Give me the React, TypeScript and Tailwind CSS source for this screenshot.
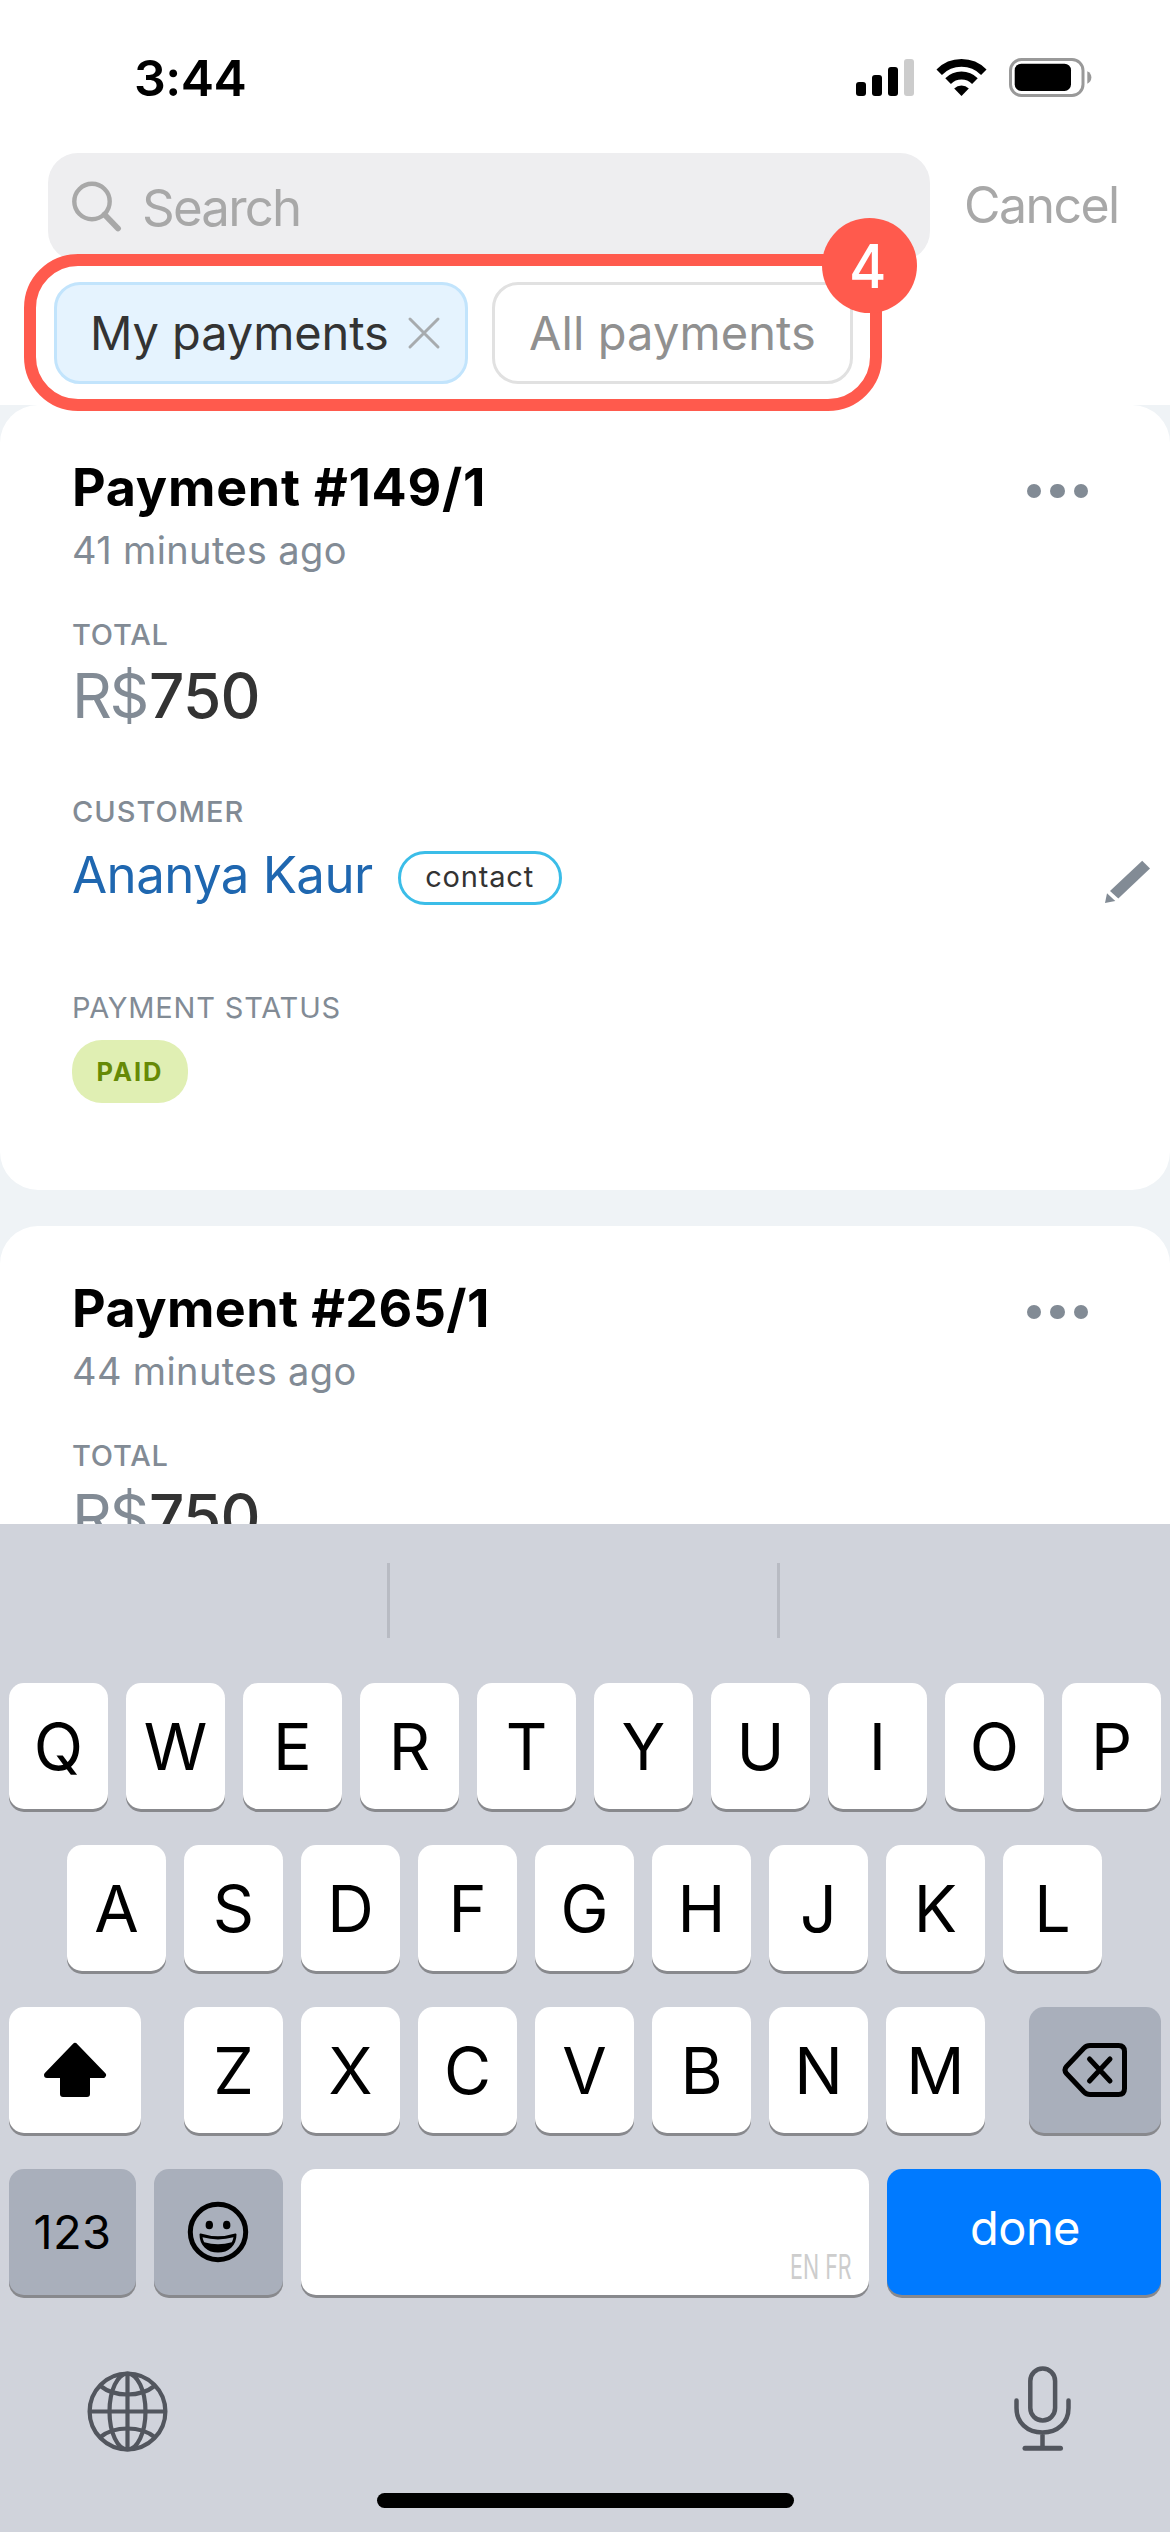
import type { ReactNode } from 'react'
import clsx from 'clsx'

type Payment = {
  id: string
  ago: string
  tracking: string
  customer?: string
  status?: string
}

const payments: Payment[] = [
  {
    id: '149/1',
    ago: '41 minutes ago',
    tracking: 'tracking-[0.76px]',
    customer: 'Ananya Kaur',
    status: 'PAID',
  },
  { id: '265/1', ago: '44 minutes ago', tracking: 'tracking-[0.42px]' },
]

function StatusBar() {
  return (
    <div className="flex h-[153px] items-start justify-between pl-[134px] pr-[78px]">
      <span className="mt-[48px] text-[50px] leading-[60px] font-semibold tracking-[-0.55px]">3:44</span>
      <div className="mt-[58px] flex">
        {/* Signal */}
        <svg width="58" height="39" viewBox="0 0 58 39">
          <rect x="0" y="24" width="10" height="14" rx="3" />
          <rect x="16" y="17" width="10" height="21" rx="3" />
          <rect x="32" y="9" width="10" height="29" rx="3" />
          <rect x="48" y="1" width="10" height="37" rx="3" fill="#cccccc" />
        </svg>
        {/* Wifi */}
        <svg className="ml-[22px]" width="51" height="39" viewBox="0 0 51 39" fill="none" stroke="#000">
          <path d="M3.2 14.2A31.5 31.5 0 0 1 47.8 14.2" strokeWidth="7.7" />
          <path d="M12.1 23.1A19 19 0 0 1 38.9 23.1" strokeWidth="8" />
          <path d="M25.5 38L18.2 30.4A10.6 10.6 0 0 1 32.8 30.4Z" fill="#000" stroke="none" />
        </svg>
        {/* Battery */}
        <svg className="ml-[22px]" width="83" height="39" viewBox="0 0 83 39">
          <rect x="1.5" y="1.5" width="72.5" height="36" rx="11" fill="none" stroke="#999999" strokeWidth="3" />
          <rect x="5.7" y="5.7" width="56.3" height="27.3" rx="6.5" />
          <path d="M78.3 13.3c5.4 2.2 5.4 10.2 0 12.4z" fill="#999999" />
        </svg>
      </div>
    </div>
  )
}

function SearchHeader() {
  return (
    <header className="relative h-[405px] bg-white">
      <StatusBar />
      <div className="flex items-center pl-[48px]">
        <div className="flex h-[108px] w-[882px] items-center rounded-[30px] bg-[#eeeef0] pl-[24px] text-[#a8a8a8]">
          <svg width="50" height="52" viewBox="0 0 50 52" fill="none" stroke="currentColor" strokeLinecap="round">
            <circle cx="20" cy="20.5" r="17.7" strokeWidth="4.4" />
            <path d="M32.5 33.5L46 47.5" strokeWidth="5.8" />
          </svg>
          <span className="mt-[2px] ml-[20px] text-[51px] leading-[60px] tracking-[-1.82px]">Search</span>
        </div>
        <span className="mb-[4px] ml-[34px] text-[50px] leading-[60px] tracking-[-1.57px] text-[#a8a8a8]">Cancel</span>
      </div>
      <div className="mt-[21px] flex gap-[24px] pl-[54px] text-[47px]">
        <div className="flex h-[102px] w-[414px] items-center rounded-[26px] border-[3.5px] border-[#c2e4fc] bg-[#e5f3fe] pl-[33px] text-[#333333]">
          <span className="tracking-[-0.09px]">My payments</span>
          <svg className="ml-[18px]" width="34" height="34" viewBox="0 0 34 34" stroke="#a7abae" strokeWidth="3" strokeLinecap="round">
            <path d="M3 3L31 31M31 3L3 31" />
          </svg>
        </div>
        <div className="flex h-[102px] w-[361px] items-center rounded-[26px] border-[3.5px] border-[#e1e1e1] pl-[34px] text-[#909090]">
          <span className="tracking-[0.09px]">All payments</span>
        </div>
      </div>

      {/* Callout around the filter chips */}
      <div className="absolute top-[254px] left-[24px] z-10 h-[157px] w-[858px] rounded-[54px] border-[12px] border-[#ff5a4d]" />
      <div className="absolute top-[218px] left-[822px] z-10 flex size-[95px] items-center justify-center rounded-full bg-[#ff5a4d] pr-[3px] text-[60px] leading-none font-medium text-white">
        <span className="scale-x-[0.95]">4</span>
      </div>
    </header>
  )
}

function PaymentCard({ id, ago, tracking, customer, status }: Payment) {
  return (
    <article className="h-[785px] shrink-0 rounded-[38px] bg-white pt-[51px] pr-[20px] pl-[72px] text-[#828b95]">
      <div className="flex justify-between">
        <h2 className={clsx('text-[52px] leading-[64px] font-bold text-black', tracking)}>Payment #{id}</h2>
        <div className="mt-[28px] mr-[62px] flex gap-[9px]">
          <i className="size-[14.4px] rounded-full bg-[#828b95]" />
          <i className="size-[14.4px] rounded-full bg-[#828b95]" />
          <i className="size-[14.4px] rounded-full bg-[#828b95]" />
        </div>
      </div>
      <p className="mt-[5px] text-[38px] leading-[50px] tracking-[0.36px]">{ago}</p>

      <p className="mt-[40px] text-[29px] leading-[40px] font-medium tracking-[0.78px]">TOTAL</p>
      <p className="mt-[6px] flex text-[62px] leading-[70px]">
        <span className="tracking-[-2.4px]">R$</span>
        <span className="ml-[2px] font-medium tracking-[-0.82px] text-[#333333]">750</span>
      </p>

      {customer && (
        <>
          <p className="mt-[61px] text-[29px] leading-[40px] font-medium tracking-[0.97px]">CUSTOMER</p>
          <div className="mt-[19px] flex h-[54px] items-start">
            <span className="text-[51px] leading-[47px] tracking-[-0.58px] text-[#1f67b0]">{customer}</span>
            <span className="ml-[25px] flex h-[54px] w-[164px] items-center justify-center rounded-full border-[3px] border-[#3bbde8] pb-[4px] text-[29px] leading-none tracking-[0.82px] text-[#333333]">
              contact
            </span>
            <svg className="mt-[9px] ml-auto" width="46" height="44" viewBox="0 0 46 44" fill="currentColor">
              <path d="M38.2 0.7L46 8.6L14.3 38.6L6 31Z" />
              <path d="M3 33.2L11.3 41L1 43Z" />
            </svg>
          </div>
        </>
      )}

      {status && (
        <>
          <p className="mt-[83px] text-[29px] leading-[40px] tracking-[0.81px]">PAYMENT STATUS</p>
          <div className="mt-[12px] flex h-[63px] w-[116px] items-center justify-center rounded-[30px] bg-[#e0efb3] text-[25.5px] leading-[40px] font-bold tracking-[2px] text-[#668a06]">
            {status}
          </div>
        </>
      )}
    </article>
  )
}

function Key({ className, children }: { className?: string; children?: ReactNode }) {
  return (
    <div
      className={clsx(
        'flex h-[126px] shrink-0 items-center justify-center rounded-[15px] shadow-[0_3px_0_#88898d]',
        className,
      )}
    >
      {children}
    </div>
  )
}

function Letters({ row }: { row: string }) {
  return (
    <div className="flex gap-[18px]">
      {row.split('').map(letter => (
        <Key key={letter} className="w-[99px] bg-white pt-[3px] text-[64.5px] text-black">
          {letter}
        </Key>
      ))}
    </div>
  )
}

function Keyboard() {
  return (
    <div className="flex h-[1008px] shrink-0 flex-col bg-[#d0d3db]">
      <div className="flex h-[159px] items-start pt-[39px] pl-[387px]">
        <div className="h-[75px] w-[3px] bg-[#b8bbc3]" />
        <div className="ml-[387px] h-[75px] w-[3px] bg-[#b8bbc3]" />
      </div>

      <div className="flex flex-col gap-[36px] px-[9px]">
        <Letters row="QWERTYUIOP" />
        <div className="flex justify-center pr-px">
          <Letters row="ASDFGHJKL" />
        </div>
        <div className="flex">
          <Key className="w-[132px] bg-white">
            {/* Shift */}
            <svg width="64" height="56" viewBox="0 0 64 56" strokeLinejoin="round" stroke="#000" strokeWidth="6">
              <path d="M32 4L60 33H44V52H20V33H4Z" />
            </svg>
          </Key>
          <div className="mr-[44px] ml-[43px]">
            <Letters row="ZXCVBNM" />
          </div>
          <Key className="w-[132px] bg-[#a9afbb]">
            {/* Backspace */}
            <svg width="66" height="56" viewBox="0 0 66 56" fill="none" stroke="#000" strokeWidth="5" strokeLinecap="round" strokeLinejoin="round">
              <path d="M28 3.5H56.5Q62.5 3.5 62.5 9.5V46.5Q62.5 52.5 56.5 52.5H28Q24.5 52.5 22 50L4.5 31.5Q1.5 28 4.5 24.5L22 6Q24.5 3.5 28 3.5Z" />
              <path d="M27.5 17L48 39M48 17L27.5 39" />
            </svg>
          </Key>
        </div>
        <div className="flex justify-between">
          <Key className="w-[127px] bg-[#a9afbb] text-[47px] tracking-[0.36px] text-black">123</Key>
          <Key className="w-[129px] bg-[#a9afbb] pr-px">
            {/* Emoji */}
            <svg width="62" height="62" viewBox="0 0 62 62">
              <circle cx="31" cy="31" r="27.7" fill="none" stroke="#000" strokeWidth="5" />
              <ellipse cx="22.3" cy="24" rx="3.7" ry="4.3" />
              <ellipse cx="39.7" cy="24" rx="3.7" ry="4.3" />
              <path d="M13.5 33.5Q31 39 48.5 33.5C48.5 44 41 50.5 31 50.5S13.5 44 13.5 33.5Z" stroke="#000" strokeWidth="2" strokeLinejoin="round" />
              <path d="M15.5 36.3Q31 40.5 46.5 36.3Q46 39 44.8 41.3Q31 45 17.2 41.3Q16 39 15.5 36.3Z" fill="#a9afbb" />
            </svg>
          </Key>
          <Key className="w-[568px] items-end justify-end bg-white pr-[17px] pb-[9px]">
            <span className="origin-right scale-x-[0.63] text-[34px] leading-[38px] text-[#cdcdcd]">EN FR</span>
          </Key>
          <Key className="w-[274px] bg-[#007aff] pb-[8px] pl-[2px] text-[47px] tracking-[-0.58px] text-white">done</Key>
        </div>
      </div>

      <div className="mt-[70px] flex items-start justify-between pr-[99px] pl-[87px]">
        {/* Globe */}
        <svg className="mt-[6px]" width="81" height="81" viewBox="0 0 81 81" fill="none" stroke="#52565e" strokeWidth="4.2">
          <circle cx="40.5" cy="40.5" r="37.9" />
          <ellipse cx="40.5" cy="40.5" rx="18" ry="37.9" />
          <path d="M40.5 2.5V78.5M2.5 40.5H78.5" />
          <path d="M13.5 15Q24 23.5 40.5 23.5T67.500 15M13.5 66Q24 57.5 40.5 57.5T67.500 66" />
        </svg>
        {/* Microphone */}
        <svg width="57" height="87" viewBox="0 0 57 87" fill="none" stroke="#52565e" strokeWidth="4.5" strokeLinecap="round">
          <rect x="16.3" y="3.5" width="24.8" height="52" rx="12.4" />
          <path d="M2.5 35.5V43C2.5 57.5 13 67.5 28.5 67.5S54.5 57.5 54.5 43V35.5M28.5 68V82" />
          <path d="M11 83.3H46.5" strokeWidth="5" />
        </svg>
      </div>

      <div className="mt-auto mb-[24px] flex justify-center">
        <div className="h-[15px] w-[417px] rounded-full bg-black" />
      </div>
    </div>
  )
}

export default function App() {
  return (
    <div className="flex h-[2532px] w-[1170px] flex-col overflow-hidden bg-[#eff3f6] font-['Inter',sans-serif]">
      <SearchHeader />
      <main className="flex h-[1119px] shrink-0 flex-col gap-[36px] overflow-hidden">
        {payments.map(payment => (
          <PaymentCard key={payment.id} {...payment} />
        ))}
      </main>
      <Keyboard />
    </div>
  )
}
